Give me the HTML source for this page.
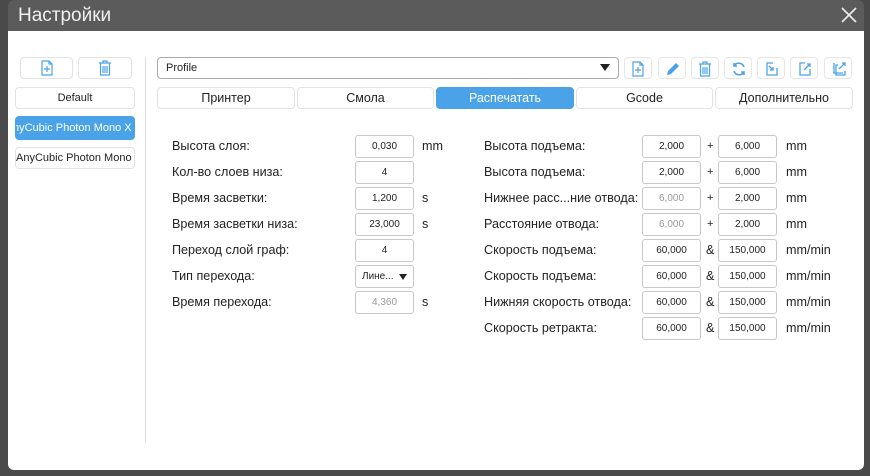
<!DOCTYPE html>
<html><head><meta charset="utf-8"><style>
*{box-sizing:border-box;margin:0;padding:0}
body{width:870px;height:476px;background:#4a4a4a;font-family:"Liberation Sans",sans-serif;position:relative;overflow:hidden;color:#222}
.title{position:absolute;left:8px;top:0;width:856px;height:31px;background:#5b5b5b;border-radius:6px 6px 0 0}
.title span{position:absolute;left:10px;top:5px;color:#f0f0f0;font-size:19px}
.x{position:absolute;left:832px;top:6px}
.win{position:absolute;left:8px;top:31px;width:856px;height:439px;background:#fff;border-radius:0 0 6px 6px}
.a{position:absolute}
.b{position:absolute;border:1px solid #e3e3e3;border-radius:4px;background:#fff;text-align:center;font-size:12px;line-height:20px;white-space:nowrap;overflow:hidden}
.lbl{position:absolute;font-size:12.6px;color:#222}
.in{position:absolute;border:1px solid #c8c8c8;border-radius:3px;height:23px;width:59px;text-align:center;font-size:10px;line-height:21px;color:#222}
.g{color:#999}
.p{position:absolute;font-size:11px;left:707px}
.ib{position:absolute;top:57px;width:28px;height:22px;border:1px solid #e6e6e6;border-radius:4px}
.ib svg{position:absolute;left:6px;top:3px}
</style></head><body>
<div class="title"><span>Настройки</span>
<svg class="x" width="18" height="18" viewBox="0 0 18 18"><path d="M2 2L16 16M16 2L2 16" stroke="#eee" stroke-width="1.6"/></svg></div>
<div class="win"></div>
<!-- left -->
<div class="b" style="left:20px;top:57px;width:53px;height:22px"><svg width="14" height="16" viewBox="0 0 14 16" style="margin-top:2px"><path d="M2 1h7l3 3v11H2z M9 1v3h3 M7 6v6M4 9h6" fill="none" stroke="#4aa3e8" stroke-width="1.2"/></svg></div>
<div class="b" style="left:78px;top:57px;width:54px;height:22px"><svg width="14" height="16" viewBox="0 0 14 16" style="margin-top:2px"><path d="M1 3h12M5 3V1h4v2M2.5 3.5V15h9V3.5M5 6v7M7 6v7M9 6v7" fill="none" stroke="#4aa3e8" stroke-width="1.2"/></svg></div>
<div class="b" style="left:15px;top:87px;width:120px;height:22px;font-size:11px">Default</div>
<div class="b" style="left:15px;top:116px;width:120px;height:24px;background:#4aa3e8;border-color:#4aa3e8;color:#fff;line-height:22px;text-align:left;font-size:11px"><span style="margin-left:-3px">nyCubic Photon Mono X 6</span></div>
<div class="b" style="left:15px;top:147px;width:120px;height:22px;text-align:left;font-size:11px">AnyCubic Photon Mono 4K</div>
<div class="a" style="left:145px;top:57px;width:1px;height:386px;background:#ddd"></div>
<!-- profile -->
<div class="a" style="left:157px;top:57px;width:462px;height:22px;border:1px solid #aaa;border-radius:4px;font-size:11px;line-height:20px;padding-left:8px">Profile<span style="position:absolute;right:8px;top:6px;width:0;height:0;border-left:5px solid transparent;border-right:5px solid transparent;border-top:7px solid #222"></span></div>
<div class="ib" style="left:624px"><svg width="14" height="16" viewBox="0 0 14 16"><path d="M2 1h7l3 3v11H2z M9 1v3h3 M7 6v6M4 9h6" fill="none" stroke="#4aa3e8" stroke-width="1.2"/></svg></div>
<div class="ib" style="left:658px"><svg width="16" height="16" viewBox="0 0 16 16"><path d="M2 14l1-4 8-8 3 3-8 8z" fill="#4aa3e8"/></svg></div>
<div class="ib" style="left:691px"><svg width="14" height="16" viewBox="0 0 14 16"><path d="M1 3h12M5 3V1h4v2M2.5 3.5V15h9V3.5M5 6v7M7 6v7M9 6v7" fill="none" stroke="#4aa3e8" stroke-width="1.2"/></svg></div>
<div class="ib" style="left:724px"><svg width="16" height="16" viewBox="0 0 16 16"><path d="M13 6A5.5 5.5 0 0 0 3 5M3 10a5.5 5.5 0 0 0 10 1M3 2v3h3M13 14v-3h-3" fill="none" stroke="#4aa3e8" stroke-width="1.6"/></svg></div>
<div class="ib" style="left:757px"><svg width="16" height="16" viewBox="0 0 16 16"><path d="M9 2H3v12h10V7M5 5l4 4M9 6v3H6" fill="none" stroke="#4aa3e8" stroke-width="1.3"/></svg></div>
<div class="ib" style="left:790px"><svg width="16" height="16" viewBox="0 0 16 16"><path d="M8 2H3v12h10V8M7 9l6-6M10 3h3v3" fill="none" stroke="#4aa3e8" stroke-width="1.3"/></svg></div>
<div class="ib" style="left:824px"><svg width="16" height="16" viewBox="0 0 16 16"><path d="M7 4H5v10h9V10M3 2v10M8 8l6-6M11 2h3v3M2 12h10" fill="none" stroke="#4aa3e8" stroke-width="1.3"/></svg></div>
<!-- tabs -->
<div class="b" style="left:157px;top:87px;width:138px;height:22px;font-size:12.5px">Принтер</div>
<div class="b" style="left:297px;top:87px;width:137px;height:22px;font-size:12.5px">Смола</div>
<div class="b" style="left:436px;top:87px;width:138px;height:22px;font-size:12.5px;background:#4aa3e8;border-color:#4aa3e8;color:#fff">Распечатать</div>
<div class="b" style="left:576px;top:87px;width:137px;height:22px;font-size:12.5px">Gcode</div>
<div class="b" style="left:715px;top:87px;width:138px;height:22px;font-size:12.5px">Дополнительно</div>
<!-- left fields -->
<div class="lbl" style="left:172px;top:139px">Высота слоя:</div><div class="in" style="left:355px;top:135px">0,030</div><div class="lbl" style="left:422px;top:139px">mm</div>
<div class="lbl" style="left:172px;top:165px">Кол-во слоев низа:</div><div class="in" style="left:355px;top:161px">4</div>
<div class="lbl" style="left:172px;top:191px">Время засветки:</div><div class="in" style="left:355px;top:187px">1,200</div><div class="lbl" style="left:422px;top:191px">s</div>
<div class="lbl" style="left:172px;top:217px">Время засветки низа:</div><div class="in" style="left:355px;top:213px">23,000</div><div class="lbl" style="left:422px;top:217px">s</div>
<div class="lbl" style="left:172px;top:243px">Переход слой граф:</div><div class="in" style="left:355px;top:239px">4</div>
<div class="lbl" style="left:172px;top:269px">Тип перехода:</div><div class="in" style="left:355px;top:265px;text-align:left;padding-left:6px">Лине...<span style="position:absolute;right:6px;top:8px;border-left:4px solid transparent;border-right:4px solid transparent;border-top:6px solid #222"></span></div>
<div class="lbl" style="left:172px;top:295px">Время перехода:</div><div class="in g" style="left:355px;top:291px">4,360</div><div class="lbl" style="left:422px;top:295px">s</div>
<!-- right fields -->
<div class="lbl" style="left:484px;top:139px">Высота подъема:</div><div class="in" style="left:642px;top:135px">2,000</div><div class="p" style="top:140px">+</div><div class="in" style="left:718px;top:135px">6,000</div><div class="lbl" style="left:786px;top:139px">mm</div>
<div class="lbl" style="left:484px;top:165px">Высота подъема:</div><div class="in" style="left:642px;top:161px">2,000</div><div class="p" style="top:166px">+</div><div class="in" style="left:718px;top:161px">6,000</div><div class="lbl" style="left:786px;top:165px">mm</div>
<div class="lbl" style="left:484px;top:191px">Нижнее расс...ние отвода:</div><div class="in g" style="left:642px;top:187px">6,000</div><div class="p" style="top:192px">+</div><div class="in" style="left:718px;top:187px">2,000</div><div class="lbl" style="left:786px;top:191px">mm</div>
<div class="lbl" style="left:484px;top:217px">Расстояние отвода:</div><div class="in g" style="left:642px;top:213px">6,000</div><div class="p" style="top:218px">+</div><div class="in" style="left:718px;top:213px">2,000</div><div class="lbl" style="left:786px;top:217px">mm</div>
<div class="lbl" style="left:484px;top:243px">Скорость подъема:</div><div class="in" style="left:642px;top:239px">60,000</div><div class="lbl" style="left:706px;top:243px">&amp;</div><div class="in" style="left:718px;top:239px">150,000</div><div class="lbl" style="left:786px;top:243px">mm/min</div>
<div class="lbl" style="left:484px;top:269px">Скорость подъема:</div><div class="in" style="left:642px;top:265px">60,000</div><div class="lbl" style="left:706px;top:269px">&amp;</div><div class="in" style="left:718px;top:265px">150,000</div><div class="lbl" style="left:786px;top:269px">mm/min</div>
<div class="lbl" style="left:484px;top:295px">Нижняя скорость отвода:</div><div class="in" style="left:642px;top:291px">60,000</div><div class="lbl" style="left:706px;top:295px">&amp;</div><div class="in" style="left:718px;top:291px">150,000</div><div class="lbl" style="left:786px;top:295px">mm/min</div>
<div class="lbl" style="left:484px;top:321px">Скорость ретракта:</div><div class="in" style="left:642px;top:317px">60,000</div><div class="lbl" style="left:706px;top:321px">&amp;</div><div class="in" style="left:718px;top:317px">150,000</div><div class="lbl" style="left:786px;top:321px">mm/min</div>
</body></html>
